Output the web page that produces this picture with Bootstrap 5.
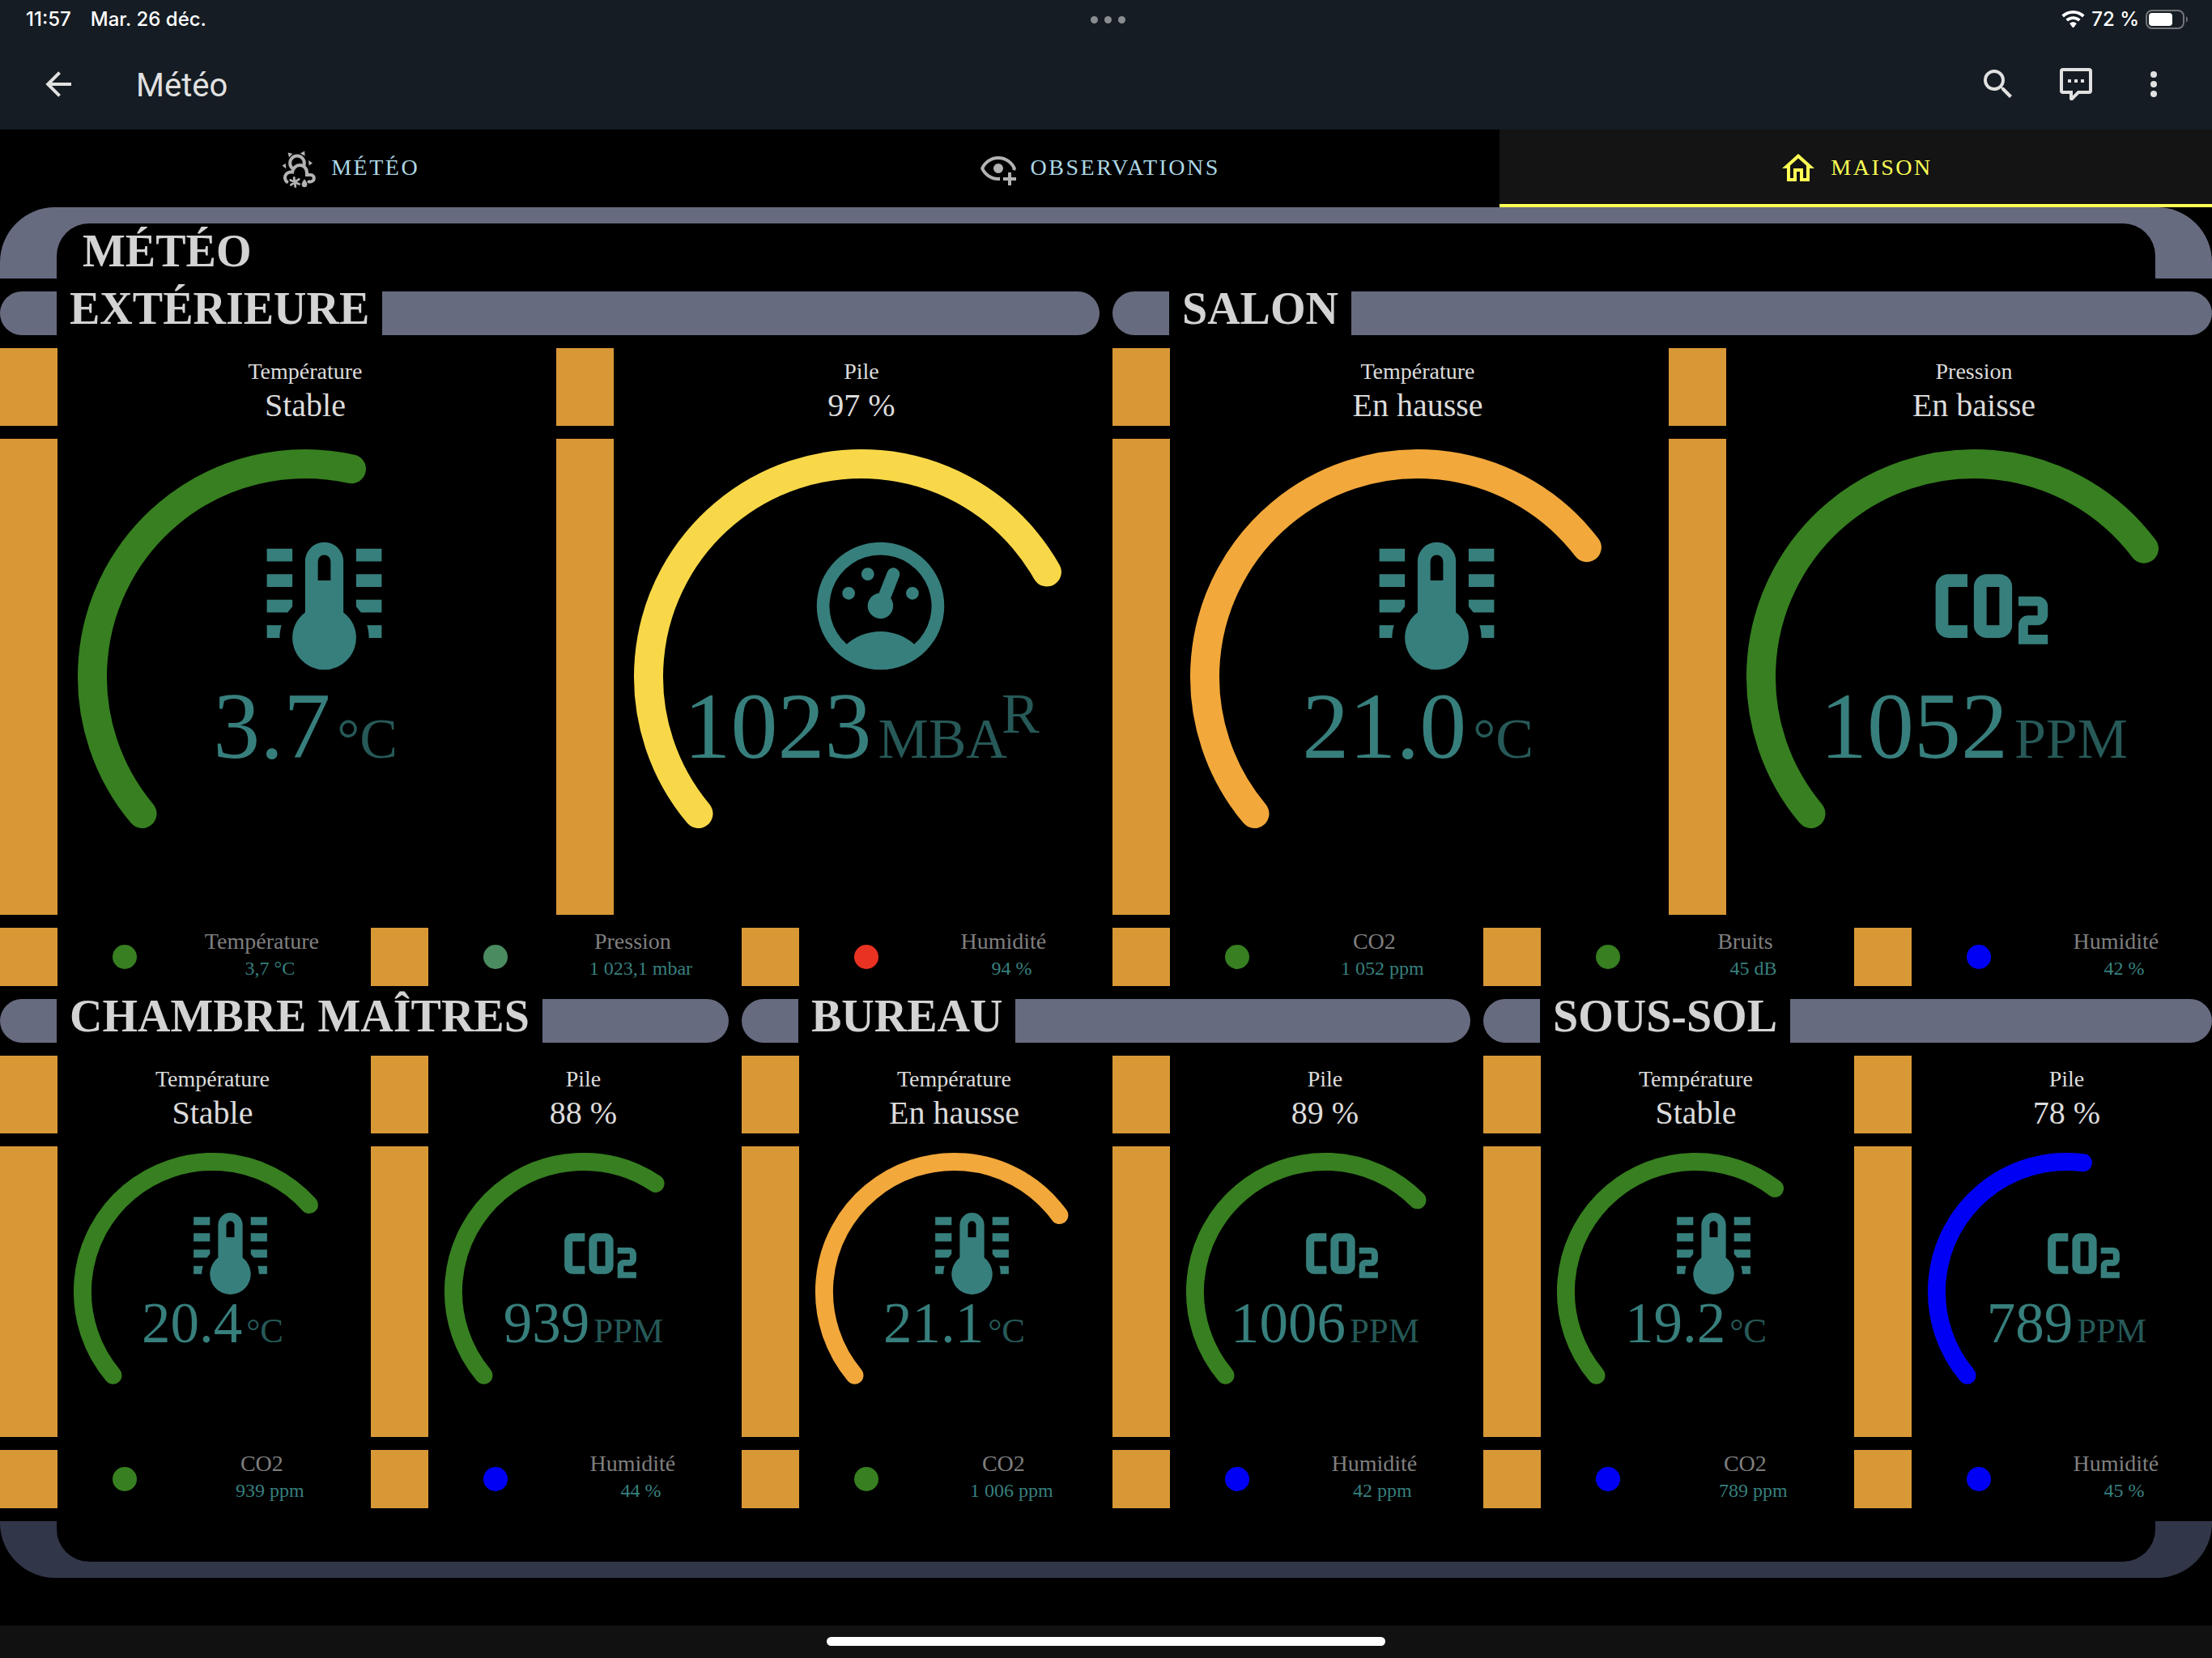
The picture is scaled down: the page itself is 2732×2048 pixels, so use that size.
<!DOCTYPE html>
<html lang="fr">
<head>
<meta charset="utf-8">
<meta name="viewport" content="width=device-width, initial-scale=1">
<title>Météo</title>
<link rel="stylesheet" href="https://cdn.jsdelivr.net/npm/bootstrap@5.3.0/dist/css/bootstrap.min.css">
<style>
  :root {
    --lcars-bar: #676b80;
    --lcars-foot: #313649;
    --lcars-orange: #d99836;
    --teal: #377f7d;
    --ok: #377f20;
    --cold: #0000f5;
    --warm: #f2a83b;
    --fair: #f8d849;
    --alert: #ea3223;
    --mild: #4b8b60;
    --gap: 16px;
  }
  body { background: #000; color: #d3d3d3; font-family: "Liberation Serif", "Times New Roman", serif; }
  svg { display: block; flex: none; }
  .ico { width: 48px; height: 48px; fill: currentColor; }

  .app-head { background: #151c23; color: #e1e1e1; }
  .status-line { height: 48px; padding: 0 28px 0 32px; color: #fff; font: 500 24px/48px Inter, sans-serif; }
  .status-line > * { flex: 1; }
  .multitask i { width: 9px; height: 9px; border-radius: 50%; background: #8a8e91; }
  .toolbar { height: 112px; padding: 0 48px; font-family: Roboto, sans-serif; }
  .toolbar h1 { font-size: 40px; line-height: 48px; font-weight: 400; margin: 0 0 0 72px; padding-top: 3px; }
  .icon-btn { background: none; border: 0; padding: 0; color: inherit; }

  .view-tabs .nav-link { height: 96px; padding: 0; gap: 16px; border-radius: 0; color: #add8e6; font-size: 28px; line-height: 32px; letter-spacing: .09em; }
  .view-tabs span { padding-bottom: 3px; }
  .view-tabs .ico { color: #b3b3b3; }
  .view-tabs .nav-link.active { background: #141414; color: #ffff55; box-shadow: inset 0 -4px #ffff55; }
  .view-tabs .nav-link.active .ico { color: inherit; }

  .elbow-top { background: var(--lcars-bar); border-radius: 68px 68px 0 0; padding: 20px 70px 0; }
  .elbow-top h2 { background: #000; border-radius: 40px 40px 0 0; height: 68px; margin: 0; padding-left: 32px; font-size: 56px; line-height: 68px; font-weight: 700; }
  .elbow-bottom { background: var(--lcars-foot); border-radius: 0 0 68px 68px; padding: 0 70px 20px; }
  .elbow-bottom div { background: #000; border-radius: 0 0 40px 40px; height: 50px; }

  .stack { display: flex; flex-direction: column; gap: var(--gap); }
  .line { display: flex; gap: var(--gap); }
  .line > * { flex: 1 1 0; min-width: 0; }

  .room-bar { display: flex; height: 54px; background: var(--lcars-bar); border-radius: 27px; padding-left: 70px; }
  .room-bar h3 { background: #000; margin: 0; padding: 0 16px; font-size: 56px; line-height: 43px; font-weight: 700; white-space: nowrap; }

  .tile { border-left: 71px solid var(--lcars-orange); padding-left: 12px; }
  .tile-state { height: 96px; padding-top: 12px; text-align: center; color: #dcdcdc; font-size: 28px; line-height: 34px; }
  .tile-state strong { display: block; font-weight: 400; font-size: 40px; line-height: 50px; }

  .dial { display: grid; --icon: 189px; --top: 112px; --shift: 46px; --num: 116px; --num-line: 108px; --unit: 70px; }
  .dial-sm { --icon: 121px; --top: 72px; --shift: 43px; --num: 71px; --num-line: 50px; --unit: 43px; }
  .dial > * { grid-area: 1 / 1; }
  .dial-arc { width: 100%; fill: none; stroke: currentColor; stroke-width: 36; stroke-linecap: round; }
  .dial-face { padding-top: var(--top); color: var(--teal); z-index: 1; }
  .dial-face svg { width: var(--icon); height: var(--icon); fill: currentColor; margin-left: var(--shift); }
  .dial-num { font-size: var(--num); line-height: var(--num-line); white-space: nowrap; }
  .dial-num small { font-size: var(--unit); line-height: 1; margin-left: 8px; opacity: .7; }
  .dial-sm .dial-num small { margin-left: 5px; }
  .dial-num sup { font-size: 1em; line-height: 0; top: 0; vertical-align: .44em; margin-left: -.1em; }

  .tile-mini { display: flex; height: 72px; }
  .tile-mini .lamp { flex: 0 0 39.5%; display: flex; align-items: center; justify-content: center; }
  .tile-mini .lamp i { width: 30px; height: 30px; border-radius: 50%; background: currentColor; }
  .tile-mini .info { flex: 1; text-align: center; color: #7f7f7f; font-size: 28px; line-height: 34px; }
  .tile-mini .name { padding-right: 20px; }
  .tile-mini .val { color: var(--teal); font-size: 24px; line-height: 32px; }

  .c-ok { color: var(--ok); } .c-cold { color: var(--cold); } .c-warm { color: var(--warm); }
  .c-fair { color: var(--fair); } .c-alert { color: var(--alert); } .c-mild { color: var(--mild); }

  .home-zone { background: #111; height: 40px; padding-top: 14px; }
  .home-zone i { width: 690px; max-width: 50%; height: 11px; border-radius: 6px; background: #fff; }
</style>
<script src="https://cdn.jsdelivr.net/npm/bootstrap@5.3.0/dist/js/bootstrap.bundle.min.js" defer></script>
</head>
<body class="d-flex flex-column min-vh-100">

<svg class="d-none" aria-hidden="true">
  <symbol id="i-thermo" viewBox="0 0 24 24"><path d="M17 3H21V5H17V3M17 7H21V9H17V7M17 11H21V13H17.75L17 12.1V11M21 15V17H19C19 16.31 18.9 15.63 18.71 15H21M3 3H7V5H3V3M3 7H7V9H3V7M3 11H7V12.1L6.25 13H3V11M3 15H5.29C5.1 15.63 5 16.31 5 17H3V15M15 13V5A3 3 0 0 0 9 5V13A5 5 0 1 0 15 13M12 4A1 1 0 0 1 13 5V8H11V5A1 1 0 0 1 12 4Z"/></symbol>
  <symbol id="i-gauge" viewBox="0 0 24 24"><path fill-rule="evenodd" d="M12 2A10 10 0 1 1 12 22A10 10 0 0 1 12 2M12 4A8 8 0 0 0 6.7 18C8.1 16.8 9.9 16 12 16S15.9 16.8 17.3 18A8 8 0 0 0 12 4M14.4 6.08A1 1 0 0 1 14.93 7.39L13.6 10.8A2 2 0 1 1 11.75 10L13.07 6.66A1 1 0 0 1 14.4 6.08M10 6A1 1 0 1 1 10 8A1 1 0 0 1 10 6M7 9A1 1 0 1 1 7 11A1 1 0 0 1 7 9M17 9A1 1 0 1 1 17 11A1 1 0 0 1 17 9Z"/></symbol>
  <symbol id="i-co2" viewBox="0 0 24 24"><path fill-rule="evenodd" d="M5 7A2 2 0 0 0 3 9V15A2 2 0 0 0 5 17H8V15H5V9H8V7H5M11 7A2 2 0 0 0 9 9V15A2 2 0 0 0 11 17H13A2 2 0 0 0 15 15V9A2 2 0 0 0 13 7H11M11 9H13V15H11V9M16 10.5V12H19V13.5H17.5A1.5 1.5 0 0 0 16 15V18H20.6V16.5H17.5V15H19A1.6 1.6 0 0 0 20.6 13.5V12A1.6 1.6 0 0 0 19 10.5H16Z"/></symbol>
</svg>

<header class="app-head">
  <div class="status-line d-flex">
    <div class="d-flex gap-4"><span>11:57</span><span>Mar. 26 déc.</span></div>
    <div class="multitask d-flex justify-content-center align-items-center gap-2"><i></i><i></i><i></i></div>
    <div class="d-flex justify-content-end align-items-center gap-2">
      <svg width="29" height="22" viewBox="0 0 29 22" fill="#fff"><path d="M14.5 0C20 0 25 2.100 28.600 5.600L26 8.400C23 5.500 19 3.800 14.500 3.800S6 5.500 3 8.400L.4 5.600C4 2.100 9 0 14.500 0ZM14.500 7.200C18 7.200 21.200 8.500 23.600 10.800L21 13.500C19.300 11.900 17 11 14.500 11S9.700 11.900 8 13.500L5.400 10.800C7.800 8.500 11 7.200 14.500 7.200ZM14.500 14.300C16.200 14.300 17.600 14.900 18.800 16L15.600 20.400Q14.500 21.600 13.400 20.400L10.200 16C11.400 14.900 12.800 14.300 14.500 14.300Z"/></svg>
      <span>72 %</span>
      <svg width="54" height="24" viewBox="0 0 54 24"><rect x="1" y="1" width="46" height="22" rx="7" fill="none" stroke="#73777b" stroke-width="2"/><rect x="4" y="4" width="29" height="16" rx="4" fill="#fff"/><path d="M50 8a5 5 0 0 1 0 8z" fill="#73777b"/></svg>
    </div>
  </div>
  <div class="toolbar d-flex align-items-center">
    <button class="icon-btn" type="button" aria-label="Retour"><svg class="ico" viewBox="0 0 24 24"><path d="M20 11V13H8L13.500 18.500L12.080 19.920L4.160 12L12.080 4.080L13.500 5.500L8 11H20Z"/></svg></button>
    <h1>Météo</h1>
    <div class="d-flex gap-5 ms-auto">
      <button class="icon-btn" type="button" aria-label="Rechercher"><svg class="ico" viewBox="0 0 24 24"><path d="M9.500 3A6.500 6.500 0 0 1 16 9.500C16 11.110 15.410 12.590 14.440 13.730L14.710 14H15.500L20.500 19L19 20.500L14 15.500V14.710L13.730 14.440C12.590 15.410 11.110 16 9.500 16A6.500 6.500 0 0 1 3 9.500A6.500 6.500 0 0 1 9.500 3M9.500 5C7 5 5 7 5 9.500S7 14 9.500 14 14 12 14 9.500 12 5 9.500 5Z"/></svg></button>
      <button class="icon-btn" type="button" aria-label="Assistant"><svg class="ico" viewBox="0 0 24 24"><path fill-rule="evenodd" d="M9 22A1 1 0 0 1 8 21V18H4A2 2 0 0 1 2 16V4A2 2 0 0 1 4 2H20A2 2 0 0 1 22 4V16A2 2 0 0 1 20 18H13.900L10.200 21.710C10 21.900 9.750 22 9.500 22H9M10 16V19.080L13.080 16H20V4H4V16H10M17 9V11H15V9H17M13 9V11H11V9H13M9 9V11H7V9H9Z"/></svg></button>
      <button class="icon-btn" type="button" aria-label="Menu"><svg class="ico" viewBox="0 0 24 24"><circle cx="12" cy="6" r="2"/><circle cx="12" cy="12" r="2"/><circle cx="12" cy="18" r="2"/></svg></button>
    </div>
  </div>
</header>

<nav class="view-tabs nav nav-fill">
  <a class="nav-link d-flex justify-content-center align-items-center" href="#meteo">
    <svg class="ico" viewBox="0 0 24 24"><circle cx="11" cy="8.700" r="4.400" fill="none" stroke="currentColor" stroke-width="2"/><path d="M5.300 2.200L8.200 2.900L6 5.300ZM12.900 2.800L15.600 1.200L15.800 4.400ZM18 7L20.500 8.700L18.300 10.300ZM3.900 9L4.200 12.200L1.700 10.300Z"/><path d="M4.700 20.300C3.300 19.200 3 17 4.200 15.600C5.100 14.500 6.500 14 8 14.300C8.400 11.800 10.300 10 12.600 10C15 10 17 12 17 14.600V16H19.300A2.100 2.100 0 0 1 19.300 20.200H18.200" fill="#000" stroke="currentColor" stroke-width="2" stroke-linecap="round"/><path d="M9.100 17.700L9.900 23.300M6.900 19.200L12.300 21.700M7.200 22.200L12.100 18.700" fill="none" stroke="currentColor" stroke-width="1.400" stroke-linecap="round"/><path d="M15.500 18.600C16.500 19.800 17.200 20.900 17.200 21.900A1.700 1.700 0 0 1 13.800 21.900C13.800 20.900 14.500 19.800 15.500 18.600Z"/></svg>
    <span>MÉTÉO</span></a>
  <a class="nav-link d-flex justify-content-center align-items-center" href="#observations">
    <svg class="ico" viewBox="0 0 24 24"><path d="M12 4.500C7 4.500 2.730 7.610 1 12C2.730 16.390 7 19.500 12 19.500C12.360 19.500 12.720 19.500 13.080 19.450C13.030 19.130 13 18.820 13 18.500C13 18.140 13.040 17.780 13.100 17.420C12.740 17.460 12.370 17.500 12 17.500C8.240 17.500 4.830 15.360 3.180 12C4.830 8.640 8.240 6.500 12 6.500C15.760 6.500 19.170 8.640 20.820 12C20.700 12.240 20.560 12.450 20.430 12.680C21.090 12.840 21.720 13.110 22.290 13.500C22.560 13 22.800 12.500 23 12C21.270 7.610 17 4.500 12 4.500M12 9A3 3 0 1 0 12 15A3 3 0 0 0 12 9M18 14.500V17.500H15V19.500H18V22.500H20V19.500H23V17.500H20V14.500H18Z"/></svg>
    <span>OBSERVATIONS</span></a>
  <a class="nav-link active d-flex justify-content-center align-items-center" href="#maison" aria-current="page">
    <svg class="ico" viewBox="0 0 24 24"><path d="M12 5.690L17 10.190V18H15V12H9V18H7V10.190L12 5.690M12 3L2 12H5V20H11V14H13V20H19V12H22"/></svg>
    <span>MAISON</span></a>
</nav>

<main class="stack">
  <div class="elbow-top"><h2>MÉTÉO</h2></div>

  <div class="line">
    <section class="stack">
      <div class="room-bar"><h3>EXTÉRIEURE</h3></div>
      <div class="line">
        <div class="tile tile-state">Température<strong>Stable</strong></div>
        <div class="tile tile-state">Pile<strong>97 %</strong></div>
      </div>
      <div class="line">
        <div class="tile dial">
          <svg class="dial-arc c-ok" viewBox="0 0 588 588"><circle cx="294" cy="294" r="263" pathLength="360" stroke-dasharray="142.500 360" transform="rotate(140 294 294)"/></svg>
          <div class="dial-face d-flex flex-column align-items-center"><svg><use href="#i-thermo"/></svg><div class="dial-num">3.7<small>°C</small></div></div>
        </div>
        <div class="tile dial">
          <svg class="dial-arc c-fair" viewBox="0 0 588 588"><circle cx="294" cy="294" r="263" pathLength="360" stroke-dasharray="190.500 360" transform="rotate(140 294 294)"/></svg>
          <div class="dial-face d-flex flex-column align-items-center"><svg><use href="#i-gauge"/></svg><div class="dial-num">1023<small>MBA<sup>R</sup></small></div></div>
        </div>
      </div>
      <div class="line">
        <div class="tile tile-mini"><div class="lamp c-ok"><i></i></div><div class="info"><div class="name">Température</div><div class="val">3,7 °C</div></div></div>
        <div class="tile tile-mini"><div class="lamp c-mild"><i></i></div><div class="info"><div class="name">Pression</div><div class="val">1 023,1 mbar</div></div></div>
        <div class="tile tile-mini"><div class="lamp c-alert"><i></i></div><div class="info"><div class="name">Humidité</div><div class="val">94 %</div></div></div>
      </div>
    </section>

    <section class="stack">
      <div class="room-bar"><h3>SALON</h3></div>
      <div class="line">
        <div class="tile tile-state">Température<strong>En hausse</strong></div>
        <div class="tile tile-state">Pression<strong>En baisse</strong></div>
      </div>
      <div class="line">
        <div class="tile dial">
          <svg class="dial-arc c-warm" viewBox="0 0 588 588"><circle cx="294" cy="294" r="263" pathLength="360" stroke-dasharray="182.600 360" transform="rotate(140 294 294)"/></svg>
          <div class="dial-face d-flex flex-column align-items-center"><svg><use href="#i-thermo"/></svg><div class="dial-num">21.0<small>°C</small></div></div>
        </div>
        <div class="tile dial">
          <svg class="dial-arc c-ok" viewBox="0 0 588 588"><circle cx="294" cy="294" r="263" pathLength="360" stroke-dasharray="183 360" transform="rotate(140 294 294)"/></svg>
          <div class="dial-face d-flex flex-column align-items-center"><svg><use href="#i-co2"/></svg><div class="dial-num">1052<small>PPM</small></div></div>
        </div>
      </div>
      <div class="line">
        <div class="tile tile-mini"><div class="lamp c-ok"><i></i></div><div class="info"><div class="name">CO2</div><div class="val">1 052 ppm</div></div></div>
        <div class="tile tile-mini"><div class="lamp c-ok"><i></i></div><div class="info"><div class="name">Bruits</div><div class="val">45 dB</div></div></div>
        <div class="tile tile-mini"><div class="lamp c-cold"><i></i></div><div class="info"><div class="name">Humidité</div><div class="val">42 %</div></div></div>
      </div>
    </section>
  </div>

  <div class="line">
    <section class="stack">
      <div class="room-bar"><h3>CHAMBRE MAÎTRES</h3></div>
      <div class="line">
        <div class="tile tile-state">Température<strong>Stable</strong></div>
        <div class="tile tile-state">Pile<strong>88 %</strong></div>
      </div>
      <div class="line">
        <div class="tile dial dial-sm">
          <svg class="dial-arc c-ok" viewBox="0 0 588 588"><circle cx="294" cy="294" r="263" pathLength="360" stroke-dasharray="178 360" transform="rotate(140 294 294)"/></svg>
          <div class="dial-face d-flex flex-column align-items-center"><svg><use href="#i-thermo"/></svg><div class="dial-num">20.4<small>°C</small></div></div>
        </div>
        <div class="tile dial dial-sm">
          <svg class="dial-arc c-ok" viewBox="0 0 588 588"><circle cx="294" cy="294" r="263" pathLength="360" stroke-dasharray="163.700 360" transform="rotate(140 294 294)"/></svg>
          <div class="dial-face d-flex flex-column align-items-center"><svg><use href="#i-co2"/></svg><div class="dial-num">939<small>PPM</small></div></div>
        </div>
      </div>
      <div class="line">
        <div class="tile tile-mini"><div class="lamp c-ok"><i></i></div><div class="info"><div class="name">CO2</div><div class="val">939 ppm</div></div></div>
        <div class="tile tile-mini"><div class="lamp c-cold"><i></i></div><div class="info"><div class="name">Humidité</div><div class="val">44 %</div></div></div>
      </div>
    </section>

    <section class="stack">
      <div class="room-bar"><h3>BUREAU</h3></div>
      <div class="line">
        <div class="tile tile-state">Température<strong>En hausse</strong></div>
        <div class="tile tile-state">Pile<strong>89 %</strong></div>
      </div>
      <div class="line">
        <div class="tile dial dial-sm">
          <svg class="dial-arc c-warm" viewBox="0 0 588 588"><circle cx="294" cy="294" r="263" pathLength="360" stroke-dasharray="184 360" transform="rotate(140 294 294)"/></svg>
          <div class="dial-face d-flex flex-column align-items-center"><svg><use href="#i-thermo"/></svg><div class="dial-num">21.1<small>°C</small></div></div>
        </div>
        <div class="tile dial dial-sm">
          <svg class="dial-arc c-ok" viewBox="0 0 588 588"><circle cx="294" cy="294" r="263" pathLength="360" stroke-dasharray="175.200 360" transform="rotate(140 294 294)"/></svg>
          <div class="dial-face d-flex flex-column align-items-center"><svg><use href="#i-co2"/></svg><div class="dial-num">1006<small>PPM</small></div></div>
        </div>
      </div>
      <div class="line">
        <div class="tile tile-mini"><div class="lamp c-ok"><i></i></div><div class="info"><div class="name">CO2</div><div class="val">1 006 ppm</div></div></div>
        <div class="tile tile-mini"><div class="lamp c-cold"><i></i></div><div class="info"><div class="name">Humidité</div><div class="val">42 ppm</div></div></div>
      </div>
    </section>

    <section class="stack">
      <div class="room-bar"><h3>SOUS-SOL</h3></div>
      <div class="line">
        <div class="tile tile-state">Température<strong>Stable</strong></div>
        <div class="tile tile-state">Pile<strong>78 %</strong></div>
      </div>
      <div class="line">
        <div class="tile dial dial-sm">
          <svg class="dial-arc c-ok" viewBox="0 0 588 588"><circle cx="294" cy="294" r="263" pathLength="360" stroke-dasharray="167.400 360" transform="rotate(140 294 294)"/></svg>
          <div class="dial-face d-flex flex-column align-items-center"><svg><use href="#i-thermo"/></svg><div class="dial-num">19.2<small>°C</small></div></div>
        </div>
        <div class="tile dial dial-sm">
          <svg class="dial-arc c-cold" viewBox="0 0 588 588"><circle cx="294" cy="294" r="263" pathLength="360" stroke-dasharray="137.300 360" transform="rotate(140 294 294)"/></svg>
          <div class="dial-face d-flex flex-column align-items-center"><svg><use href="#i-co2"/></svg><div class="dial-num">789<small>PPM</small></div></div>
        </div>
      </div>
      <div class="line">
        <div class="tile tile-mini"><div class="lamp c-cold"><i></i></div><div class="info"><div class="name">CO2</div><div class="val">789 ppm</div></div></div>
        <div class="tile tile-mini"><div class="lamp c-cold"><i></i></div><div class="info"><div class="name">Humidité</div><div class="val">45 %</div></div></div>
      </div>
    </section>
  </div>

  <div class="elbow-bottom"><div></div></div>
</main>

<footer class="home-zone d-flex justify-content-center mt-auto"><i></i></footer>
</body>
</html>
